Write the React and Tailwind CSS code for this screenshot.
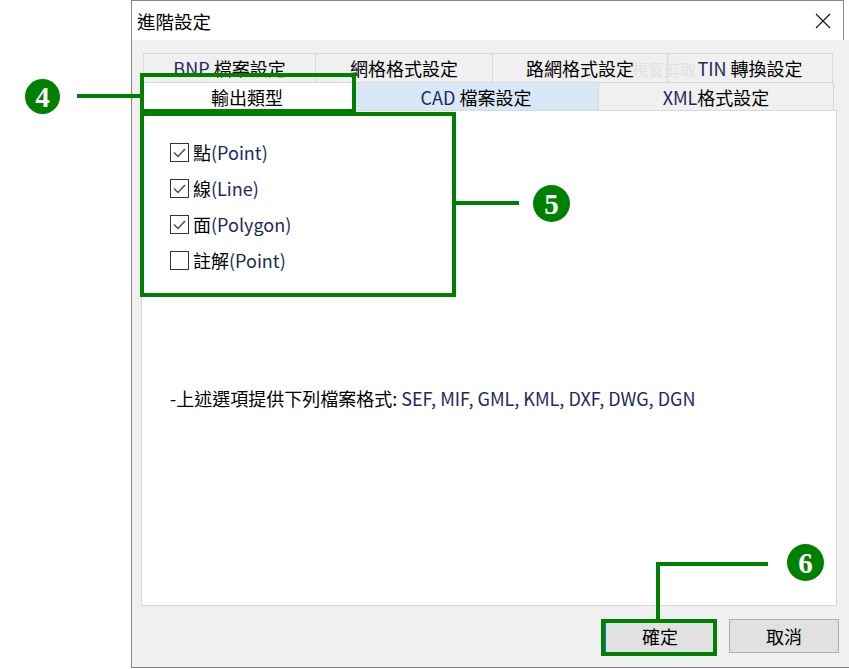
import React from 'react';

function Lat({ children }) {
  return <span className="text-[#23295c]">{children}</span>;
}

function Tab({ children, className = '' }) {
  return (
    <div className={`flex flex-none items-center justify-center border-l border-t border-[#d9d9d9] ${className}`}>
      {children}
    </div>
  );
}

function CheckRow({ checked, zh, en }) {
  return (
    <div className="flex h-[36px] items-center">
      <div className="flex h-[19px] w-[19px] flex-none items-center justify-center border border-[#333333] bg-white">
        {checked && (
          <svg width="17" height="17" viewBox="0 0 17 17">
            <path d="M3 8.5 L7 12.5 L14 5" fill="none" stroke="#4a4a4a" strokeWidth="1.4" />
          </svg>
        )}
      </div>
      <span className="ml-[4px]">
        {zh}
        <Lat>({en})</Lat>
      </span>
    </div>
  );
}

// numbered callout, serif digit on a green disc
function Badge({ n, size, className }) {
  const r = size / 2;
  return (
    <svg className={`absolute ${className}`} width={size} height={size} viewBox={`0 0 ${size} ${size}`}>
      <circle cx={r} cy={r} r={r} fill="#008000" />
      <text
        x={r}
        y={r + 10}
        textAnchor="middle"
        fontFamily="'Liberation Serif', 'DejaVu Serif', serif"
        fontWeight="bold"
        fontSize="29"
        fill="#ffffff"
      >
        {n}
      </text>
    </svg>
  );
}

export default function App() {
  return (
    <div className="relative flex h-[669px] w-[849px] overflow-hidden bg-white font-['Noto_Sans_CJK_TC',sans-serif] text-[18px] leading-[24px] text-black">
      <div className="w-[131px] flex-none" />

      {/* dialog window */}
      <div className="flex h-[668px] flex-1 flex-col border-b border-l border-[#888888]">
        <div className="flex h-[40px] flex-none">
          <div className="flex w-[712px] items-center justify-between border-r border-t border-[#888888] bg-white pl-[5px] pr-[12px]">
            <span className="text-[18.5px]">進階設定</span>
            <svg width="16" height="16" viewBox="0 0 16 16">
              <path d="M1 1 L15 15 M15 1 L1 15" stroke="#111" strokeWidth="1.1" fill="none" />
            </svg>
          </div>
          <div className="flex-1 bg-white" />
        </div>

        <div className="flex flex-1 flex-col bg-[#f0f0f0] pl-[9px] pt-[13px]">
          {/* tab rows */}
          <div className="ml-[2px] flex h-[29px]">
            <Tab className="w-[172px]">
              <Lat>BNP</Lat>&nbsp;檔案設定
            </Tab>
            <Tab className="w-[177px]">網格格式設定</Tab>
            <Tab className="w-[175px]">路網格式設定</Tab>
            <Tab className="w-[166px] border-r">
              <Lat>TIN</Lat>&nbsp;轉換設定
            </Tab>
          </div>
          <div className="flex h-[28px]">
            <Tab className="w-[212px] border-r bg-white">輸出類型</Tab>
            <Tab className="w-[245px] border-[#cddff2] bg-[#d9e8f6]">
              <Lat>CAD</Lat>&nbsp;檔案設定
            </Tab>
            <Tab className="w-[236px] border-r">
              <Lat>XML</Lat>格式設定
            </Tab>
          </div>

          {/* tab page */}
          <div className="flex h-[496px] w-[696px] flex-col border border-[#d9d9d9] bg-white pl-[28px] pt-[23px]">
            <CheckRow checked zh="點" en="Point" />
            <CheckRow checked zh="線" en="Line" />
            <CheckRow checked zh="面" en="Polygon" />
            <CheckRow zh="註解" en="Point" />
            <div className="mt-[108px]">
              -上述選項提供下列檔案格式: <Lat>SEF, MIF, GML, KML, DXF, DWG, DGN</Lat>
            </div>
          </div>

          {/* buttons */}
          <div className="mt-[13px] flex justify-end gap-[14px] pr-[10px]">
            <button className="flex h-[34px] w-[110px] items-center justify-center border border-[#0078d7] bg-[#e1e1e1]">
              確定
            </button>
            <button className="flex h-[34px] w-[110px] items-center justify-center border border-[#adadad] bg-[#e1e1e1]">
              取消
            </button>
          </div>
        </div>
      </div>

      {/* snipping tool ghost */}
      <div className="pointer-events-none absolute left-[632px] top-[57px] text-[16px] text-[#d6d6d6]/60">視窗剪取</div>

      {/* annotations */}
      <div className="absolute left-[140px] top-[73px] h-[40px] w-[216px] border-4 border-[#008000]" />
      <div className="absolute left-[140px] top-[112px] h-[185px] w-[316px] border-4 border-[#008000]" />
      <div className="absolute left-[77px] top-[94px] h-[4px] w-[63px] bg-[#008000]" />
      <Badge n="4" size={35} className="left-[25px] top-[79px]" />
      <div className="absolute left-[455px] top-[201px] h-[4px] w-[64px] bg-[#008000]" />
      <Badge n="5" size={37} className="left-[533px] top-[185px]" />
      <div className="absolute left-[656px] top-[562px] h-[4px] w-[112px] bg-[#008000]" />
      <div className="absolute left-[656px] top-[562px] h-[58px] w-[4px] bg-[#008000]" />
      <div className="absolute left-[601px] top-[619px] h-[37px] w-[116px] border-4 border-[#008000]" />
      <Badge n="6" size={37} className="left-[787px] top-[544px]" />
    </div>
  );
}
